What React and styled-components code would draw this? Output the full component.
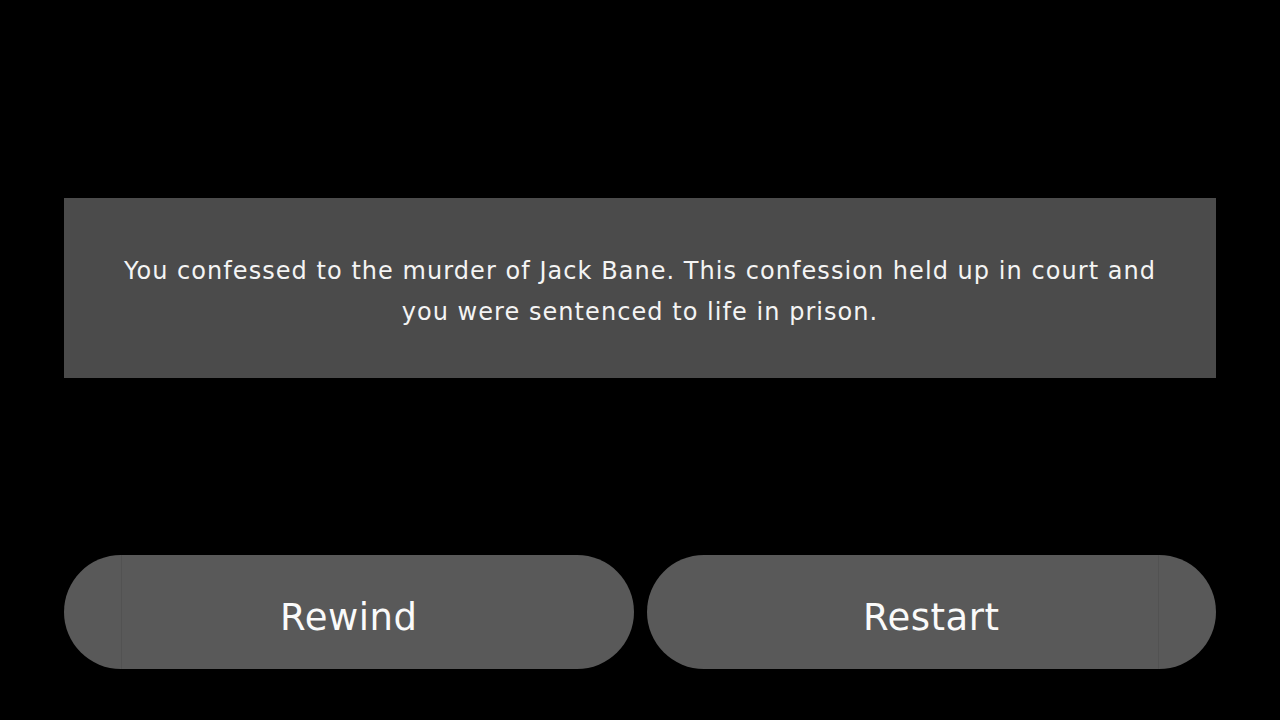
import React from 'react';
import styled, { createGlobalStyle } from 'styled-components';

const GlobalStyle = createGlobalStyle`
  html, body {
    margin: 0;
    padding: 0;
    background: #000;
  }
  body {
    font-family: "DejaVu Sans", "Liberation Sans", sans-serif;
  }
`;

const Screen = styled.div`
  width: 1280px;
  height: 720px;
  box-sizing: border-box;
  padding: 198px 64px 0;
  display: flex;
  flex-direction: column;
  background: #000;
`;

const Message = styled.div`
  height: 180px;
  background: #4b4b4b;
  display: flex;
  align-items: center;
  justify-content: center;
  padding: 8px 50px 0;
  box-sizing: border-box;
`;

const MessageText = styled.p`
  margin: 0;
  color: #f4f4f4;
  font-size: 24px;
  line-height: 41px;
  text-align: center;
  letter-spacing: 1.05px;
`;

const Actions = styled.div`
  margin-top: 177px;
  display: grid;
  grid-template-columns: 1fr 1fr;
  gap: 13px;
`;

const Button = styled.button`
  position: relative;
  height: 114px;
  border: none;
  border-radius: 57px;
  background: #595959;
  color: #fafafa;
  font-family: inherit;
  font-size: 37px;
  letter-spacing: 0.5px;
  padding: 10px 0 0;
  cursor: pointer;
  overflow: hidden;

  &::after {
    content: "";
    position: absolute;
    top: 0;
    bottom: 0;
    ${({ $edge }) => $edge}: 57px;
    width: 1px;
    background: #525252;
  }
`;

export default function App() {
  return (
    <>
      <GlobalStyle />
      <Screen>
        <Message>
          <MessageText>
            You confessed to the murder of Jack Bane. This confession held up in court and you were sentenced to life in prison.
          </MessageText>
        </Message>
        <Actions>
          <Button $edge="left">Rewind</Button>
          <Button $edge="right">Restart</Button>
        </Actions>
      </Screen>
    </>
  );
}
